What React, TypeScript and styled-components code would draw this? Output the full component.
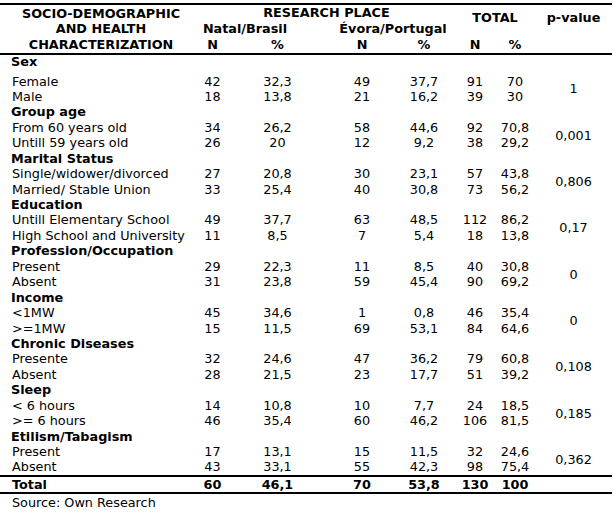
import React from 'react';
import styled, { createGlobalStyle } from 'styled-components';

const GlobalStyle = createGlobalStyle`
  html, body { margin: 0; padding: 0; background: #fff; }
  body { font-family: "DejaVu Sans", Verdana, sans-serif; color: #000; }
`;

const COLS = '180px 65px 65px 21px 62px 62px 40px 40px 77px';
const ROW = 15.45;

const Page = styled.div`
  width: 616px;
  height: 513px;
  padding-top: 3px;
  box-sizing: border-box;
  overflow: hidden;
`;

const Table = styled.div`
  width: 612px;
  border-top: 2px solid #000;
  font-size: 12.8px;
`;

const Header = styled.div`
  display: grid;
  grid-template-columns: ${COLS};
  grid-template-rows: 16px 16px 16px;
  border-bottom: 2px solid #000;
  font-weight: bold;
`;

const HeadCell = styled.div<{ $col: string; $row: string; $pl?: number; $pb?: number }>`
  grid-column: ${(p) => p.$col};
  grid-row: ${(p) => p.$row};
  display: flex;
  align-items: center;
  justify-content: center;
  text-align: center;
  white-space: nowrap;
  line-height: 15.5px;
  padding-left: ${(p) => p.$pl ?? 0}px;
  padding-bottom: ${(p) => p.$pb ?? 0}px;
`;

const Group = styled.div<{ $first?: boolean }>`
  display: grid;
  grid-template-columns: ${COLS};
  grid-template-rows: ${(p) => (p.$first ? 18.5 : ROW)}px ${ROW}px ${ROW}px;
`;

const GroupTitle = styled.div<{ $first?: boolean }>`
  grid-column: 1 / -1;
  grid-row: 1;
  padding-left: 11px;
  font-weight: bold;
  line-height: ${(p) => (p.$first ? 13 : ROW)}px;
  white-space: nowrap;
`;

const Label = styled.div<{ $row: number }>`
  grid-column: 1;
  grid-row: ${(p) => p.$row};
  padding-left: 12px;
  line-height: ${ROW}px;
  white-space: nowrap;
`;

const Value = styled.div<{ $row: number; $col: number }>`
  grid-column: ${(p) => p.$col};
  grid-row: ${(p) => p.$row};
  text-align: center;
  line-height: ${ROW}px;
  white-space: nowrap;
`;

const PValue = styled.div`
  grid-column: 9;
  grid-row: 2 / span 2;
  display: flex;
  align-items: center;
  justify-content: center;
`;

const TotalRow = styled.div`
  display: grid;
  grid-template-columns: ${COLS};
  grid-template-rows: 15.5px;
  border-top: 2px solid #000;
  border-bottom: 2px solid #000;
  font-weight: bold;
  line-height: 15.5px;
`;

const TotalLabel = styled.div`
  grid-column: 1;
  padding-left: 12px;
`;

const TotalValue = styled.div<{ $col: number }>`
  grid-column: ${(p) => p.$col};
  text-align: center;
`;

const Source = styled.div`
  padding-left: 12px;
  padding-top: 1px;
  font-size: 12.8px;
  line-height: 15px;
`;

type Row = { label: string; v: string[] };
type G = { title: string; rows: [Row, Row]; p: string };

const groups: G[] = [
  { title: 'Sex', p: '1', rows: [
    { label: 'Female', v: ['42', '32,3', '49', '37,7', '91', '70'] },
    { label: 'Male', v: ['18', '13,8', '21', '16,2', '39', '30'] },
  ] },
  { title: 'Group age', p: '0,001', rows: [
    { label: 'From 60 years old', v: ['34', '26,2', '58', '44,6', '92', '70,8'] },
    { label: 'Untill 59 years old', v: ['26', '20', '12', '9,2', '38', '29,2'] },
  ] },
  { title: 'Marital Status', p: '0,806', rows: [
    { label: 'Single/widower/divorced', v: ['27', '20,8', '30', '23,1', '57', '43,8'] },
    { label: 'Married/ Stable Union', v: ['33', '25,4', '40', '30,8', '73', '56,2'] },
  ] },
  { title: 'Education', p: '0,17', rows: [
    { label: 'Untill Elementary School', v: ['49', '37,7', '63', '48,5', '112', '86,2'] },
    { label: 'High School and University', v: ['11', '8,5', '7', '5,4', '18', '13,8'] },
  ] },
  { title: 'Profession/Occupation', p: '0', rows: [
    { label: 'Present', v: ['29', '22,3', '11', '8,5', '40', '30,8'] },
    { label: 'Absent', v: ['31', '23,8', '59', '45,4', '90', '69,2'] },
  ] },
  { title: 'Income', p: '0', rows: [
    { label: '<1MW', v: ['45', '34,6', '1', '0,8', '46', '35,4'] },
    { label: '>=1MW', v: ['15', '11,5', '69', '53,1', '84', '64,6'] },
  ] },
  { title: 'Chronic Diseases', p: '0,108', rows: [
    { label: 'Presente', v: ['32', '24,6', '47', '36,2', '79', '60,8'] },
    { label: 'Absent', v: ['28', '21,5', '23', '17,7', '51', '39,2'] },
  ] },
  { title: 'Sleep', p: '0,185', rows: [
    { label: '< 6 hours', v: ['14', '10,8', '10', '7,7', '24', '18,5'] },
    { label: '>= 6 hours', v: ['46', '35,4', '60', '46,2', '106', '81,5'] },
  ] },
  { title: 'Etilism/Tabagism', p: '0,362', rows: [
    { label: 'Present', v: ['17', '13,1', '15', '11,5', '32', '24,6'] },
    { label: 'Absent', v: ['43', '33,1', '55', '42,3', '98', '75,4'] },
  ] },
];

const VALUE_COLS = [2, 3, 5, 6, 7, 8];
const totals = ['60', '46,1', '70', '53,8', '130', '100'];

export default function App() {
  return (
    <Page>
      <GlobalStyle />
      <Table>
        <Header>
          <HeadCell $col="1" $row="1 / span 3" $pl={22}>
            SOCIO-DEMOGRAPHIC<br />AND HEALTH<br />CHARACTERIZATION
          </HeadCell>
          <HeadCell $col="2 / 7" $row="1" $pl={18}>RESEARCH PLACE</HeadCell>
          <HeadCell $col="7 / 9" $row="1 / span 2" $pb={7}>TOTAL</HeadCell>
          <HeadCell $col="9" $row="1 / span 2" $pb={7}>p-value</HeadCell>
          <HeadCell $col="2 / 4" $row="2">Natal/Brasil</HeadCell>
          <HeadCell $col="5 / 7" $row="2">Évora/Portugal</HeadCell>
          {VALUE_COLS.map((c, i) => (
            <HeadCell key={c} $col={String(c)} $row="3">{i % 2 === 0 ? 'N' : '%'}</HeadCell>
          ))}
        </Header>
        {groups.map((g, gi) => (
          <Group key={g.title} $first={gi === 0}>
            <GroupTitle $first={gi === 0}>{g.title}</GroupTitle>
            {g.rows.map((r, ri) => (
              <React.Fragment key={ri}>
                <Label $row={ri + 2}>{r.label}</Label>
                {r.v.map((v, vi) => (
                  <Value key={vi} $row={ri + 2} $col={VALUE_COLS[vi]}>{v}</Value>
                ))}
              </React.Fragment>
            ))}
            <PValue>{g.p}</PValue>
          </Group>
        ))}
        <TotalRow>
          <TotalLabel>Total</TotalLabel>
          {totals.map((t, i) => (
            <TotalValue key={i} $col={VALUE_COLS[i]}>{t}</TotalValue>
          ))}
        </TotalRow>
      </Table>
      <Source>Source: Own Research</Source>
    </Page>
  );
}
